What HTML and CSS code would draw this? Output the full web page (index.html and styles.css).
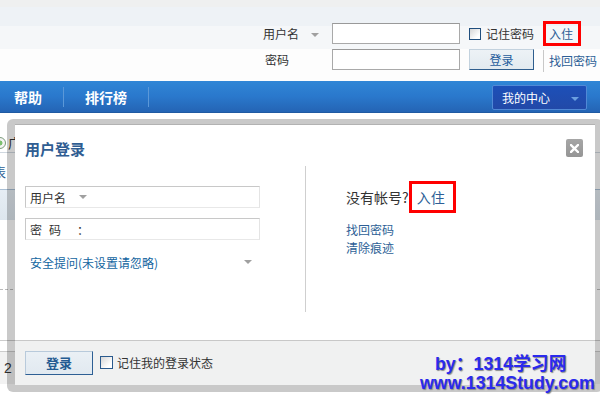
FILE: index.html
```html
<!DOCTYPE html>
<html lang="zh-CN">
<head>
<meta charset="utf-8">
<title>用户登录</title>
<link rel="stylesheet" href="styles.css">
</head>
<body>
<div class="page">
  <header class="topbar">
    <div class="top-form">
      <div class="tl-label">用户名 <span class="tri tri-gray"></span></div>
      <div class="tl-input"></div>
      <label class="tl-check"><span class="cbox"></span>记住密码</label>
      <div class="tl-reg"><a class="reg-box">入住</a></div>
      <div class="tl-label tl-pw">密码</div>
      <div class="tl-input"></div>
      <div class="tl-btn">登录</div>
      <div class="tl-find">找回密码</div>
    </div>
  </header>
  <nav class="nav">
    <a class="nav-item first">帮助</a>
    <span class="nav-sep"></span>
    <a class="nav-item">排行榜</a>
    <span class="nav-sep"></span>
    <div class="nav-spacer"></div>
    <div class="my-center">我的中心 <span class="tri tri-blue"></span></div>
  </nav>
  <main class="content">
    <div class="c-row1"><span class="c-icon"></span><span class="c-text">广</span></div>
    <div class="c-row2"><span class="c-text2">表</span></div>
    <div class="c-row3"></div>
    <div class="c-gap"></div>
    <div class="c-dash"></div>
    <div class="c-gap2"></div>
    <div class="c-row4"></div>
    <div class="c-row5"><span>2</span></div>
  </main>
</div>

<div class="dialog">
  <div class="dlg-inner">
    <div class="dlg-head">
      <h1 class="dlg-title">用户登录</h1>
      <span class="dlg-close"><svg width="9" height="9" viewBox="0 0 9 9"><path d="M1 1L8 8M8 1L1 8" stroke="#fff" stroke-width="2.4" stroke-linecap="square"/></svg></span>
    </div>
    <div class="dlg-body">
      <div class="dlg-left">
        <div class="f-input"><span>用户名</span><span class="tri tri-gray tri-in"></span></div>
        <div class="f-input f-pw"><span class="pw1">密</span><span class="pw2">码</span><span class="pw3">：</span></div>
        <div class="f-question"><span>安全提问(未设置请忽略)</span><span class="tri tri-gray"></span></div>
      </div>
      <div class="dlg-sep"></div>
      <div class="dlg-right">
        <div class="no-acc">没有帐号?<a class="reg-box big">入住</a></div>
        <a class="r-link">找回密码</a>
        <a class="r-link">清除痕迹</a>
      </div>
    </div>
    <div class="dlg-foot">
      <button class="f-btn">登录</button>
      <label class="f-check"><span class="cbox cbox-lg"></span>记住我的登录状态</label>
    </div>
  </div>
</div>

<div class="watermark">
  <div class="wm1">by：1314学习网</div>
  <div class="wm2">www.1314Study.com</div>
</div>
</body>
</html>
```

FILE: styles.css
```css
* { box-sizing: border-box; }
html, body { margin: 0; padding: 0; }
body {
  width: 600px;
  height: 395px;
  overflow: hidden;
  position: relative;
  background: #fff;
  font-family: "Noto Sans CJK SC", "Liberation Sans", sans-serif;
  font-size: 12px;
  color: #333;
}
a { text-decoration: none; cursor: pointer; }

.tri {
  display: inline-block;
  width: 0; height: 0;
  border-left: 4px solid transparent;
  border-right: 4px solid transparent;
  border-top: 4px solid #a0a0a0;
  vertical-align: middle;
}
.tri-blue { border-top-color: #6b9fe0; }

/* ---------- top bar ---------- */
.topbar {
  height: 81px;
  background: linear-gradient(#eff0f0 0, #eff0f0 7px, #eef2f6 7px, #eef2f6 26px, #f5f7f9 26px, #f5f7f9 49px, #fdfdfd 49px);
}
.top-form {
  display: grid;
  grid-template-columns: 69px 128px 83px 57px;
  grid-template-rows: 21px 21px;
  row-gap: 5px;
  margin-left: 263px;
  padding-top: 23px;
}
.tl-label { line-height: 21px; color: #333; white-space: nowrap; }
.tl-label .tri { margin-left: 9px; margin-top: -2px; }
.tl-pw { padding-left: 2px; }
.tl-input {
  border: 1px solid #a9a9a9;
  border-top-color: #999;
  background: #fff;
}
.tl-check {
  display: flex;
  align-items: center;
  padding-left: 9px;
  white-space: nowrap;
  color: #333;
}
.cbox {
  display: inline-block;
  width: 12px; height: 12px;
  border: 1px solid #1f4e7e;
  background: linear-gradient(135deg, #d6d6d6, #fff 75%);
  margin-right: 5px;
}
.tl-reg { position: relative; }
.reg-box {
  display: inline-block;
  border: 3px solid #f00;
  color: #2d5f96;
  white-space: nowrap;
}
.tl-reg .reg-box {
  margin-top: -2px;
  height: 25px;
  width: 38px;
  padding-left: 3px;
  line-height: 19px;
}
.tl-btn {
  margin-left: 9px;
  width: 65px;
  border: 1px solid #c3d2de;
  border-right-color: #2f5e8e;
  border-bottom-color: #2f5e8e;
  background: linear-gradient(#edf2f6, #e2eaf0);
  color: #1e5c9c;
  text-align: center;
  line-height: 19px;
}
.tl-find {
  margin-top: 1px;
  height: 22px;
  border-left: 1px solid #c8c8c8;
  padding-left: 5px;
  line-height: 21px;
  color: #2d5f96;
  white-space: nowrap;
}

/* ---------- nav ---------- */
.nav {
  height: 32px;
  display: flex;
  align-items: center;
  background: linear-gradient(#3086d6, #2a78cc 50%, #2464b4);
  border-bottom: 1px solid #1f5aa2;
}
.nav-item {
  color: #fff;
  font-weight: bold;
  font-size: 14px;
  padding: 0 21px;
  line-height: 20px;
}
.nav-item.first { padding-left: 14px; }
.nav-sep {
  width: 1px;
  height: 20px;
  background: #5b98d8;
}
.nav-spacer { flex: 1; }
.my-center {
  width: 95px;
  height: 25px;
  margin-right: 13px;
  margin-top: 2px;
  border: 1px solid #5089d6;
  border-radius: 2px;
  background: linear-gradient(#1d50b8, #2249a8);
  color: #fff;
  line-height: 23px;
  padding-left: 9px;
  white-space: nowrap;
}
.my-center .tri { margin-left: 18px; margin-top: -2px; }

/* ---------- page content behind dialog ---------- */
.content { padding-top: 20px; }
.c-row1 { height: 19px; display: flex; align-items: center; }
.c-icon {
  width: 12px; height: 12px;
  margin-left: -6px;
  border: 1px solid #7a9a7a;
  border-radius: 50%;
  background: radial-gradient(circle, #7cc070 30%, #f4f4f4 40%);
}
.c-text { margin-left: 2px; font-size: 13px; }
.c-row2 {
  height: 38px;
  border-top: 1px solid #d0d8e0;
  border-bottom: 1px solid #a9bfd4;
  display: flex; align-items: center;
}
.c-text2 { margin-left: -7px; color: #2d5f96; font-size: 13px; }
.c-row3 { height: 30px; background: linear-gradient(#e6edf4, #dde6ee); }
.c-gap { height: 69px; }
.c-dash { border-top: 1px dashed #bbb; }
.c-gap2 { height: 50px; }
.c-row4 { height: 12px; border-top: 1px solid #ccc; border-bottom: 1px solid #ccc; }
.c-row5 {
  height: 32px;
  background: #f2f2f2;
  display: flex; align-items: center;
  padding-left: 4px;
  font-family: "Liberation Sans", sans-serif;
  font-size: 14px;
  color: #333;
}

/* ---------- dialog ---------- */
.dialog {
  position: absolute;
  left: 7px;
  top: 119px;
  width: 596px;
  padding: 5px 8px 7px 8px;
  background: rgba(0, 0, 0, 0.21);
  border-radius: 6px;
}
.dlg-inner {
  background: #fff;
  border-top: 1px solid #b2b2b2;
}
.dlg-head {
  height: 41px;
  position: relative;
  padding: 15px 0 0 10px;
}
.dlg-title {
  margin: 0;
  font-size: 15px;
  line-height: 18px;
  font-weight: bold;
  color: #2f5d92;
}
.dlg-close {
  position: absolute;
  right: 12px;
  top: 14px;
  width: 17px;
  height: 18px;
  border-radius: 2px;
  background: linear-gradient(#a6a6a6, #959595);
  display: flex; align-items: center; justify-content: center;
}
.dlg-body {
  display: flex;
  height: 174px;
  padding-bottom: 28px;
}
.dlg-left {
  width: 235px;
  margin-left: 10px;
  padding-top: 20px;
}
.f-input {
  height: 22px;
  border: 1px solid #c8c8c8;
  border-right-color: #e4e4e4;
  border-bottom-color: #e8e8e8;
  display: flex;
  align-items: center;
  padding-left: 4px;
  color: #333;
  font-size: 12px;
}
.tri-in { margin-left: 13px; }
.f-pw { margin-top: 10px; }
.pw1 { width: 19px; }
.pw2 { width: 28px; }
.pw3 { width: 14px; }
.f-question {
  margin-top: 13px;
  height: 18px;
  display: flex;
  align-items: center;
  justify-content: space-between;
  padding-left: 5px;
  padding-right: 8px;
  color: #11659f;
}
.dlg-sep {
  width: 1px;
  margin-left: 45px;
  background: #cfcfcf;
}
.dlg-right {
  padding-left: 40px;
  padding-top: 15px;
  display: flex;
  flex-direction: column;
  align-items: flex-start;
}
.no-acc {
  display: flex;
  align-items: center;
  height: 32px;
  font-size: 14px;
  color: #333;
  white-space: nowrap;
}
.reg-box.big {
  height: 32px;
  width: 47px;
  padding-left: 5px;
  line-height: 26px;
  font-size: 14px;
  color: #2d5f96;
}
.r-link {
  line-height: 18px;
  color: #2d5f96;
  white-space: nowrap;
}
.no-acc + .r-link { margin-top: 8px; }
.dlg-foot {
  height: 45px;
  border-top: 1px solid #c8c8c8;
  background: #f0f1f1;
  display: flex;
  align-items: flex-start;
  padding: 10px 0 0 10px;
}
.f-btn {
  width: 68px;
  height: 24px;
  margin: 0;
  padding: 0;
  border: 1px solid #b8cadb;
  border-right-color: #2d5f94;
  border-bottom-color: #2d5f94;
  background: linear-gradient(#eaf0f5, #e1e9f0);
  font-family: "Noto Sans CJK SC", sans-serif;
  font-size: 13px;
  font-weight: bold;
  color: #245b92;
  line-height: 22px;
}
.f-check {
  display: flex;
  align-items: center;
  margin-left: 7px;
  margin-top: 5px;
  color: #333;
  font-size: 12px;
  line-height: 13px;
  white-space: nowrap;
}
.cbox-lg { width: 13px; height: 13px; margin-right: 4px; border-color: #2a5a8d; }

/* ---------- watermark ---------- */
.watermark {
  position: absolute;
  left: 420px;
  top: 355px;
  font-family: "Liberation Sans", "Noto Sans CJK SC", sans-serif;
  font-weight: bold;
  font-size: 17.8px;
  line-height: 19px;
  color: #2a2aee;
  text-shadow: 1px 1px 1px #8a8a8a;
  white-space: nowrap;
}
.wm1 { margin-left: 15px; }
```
